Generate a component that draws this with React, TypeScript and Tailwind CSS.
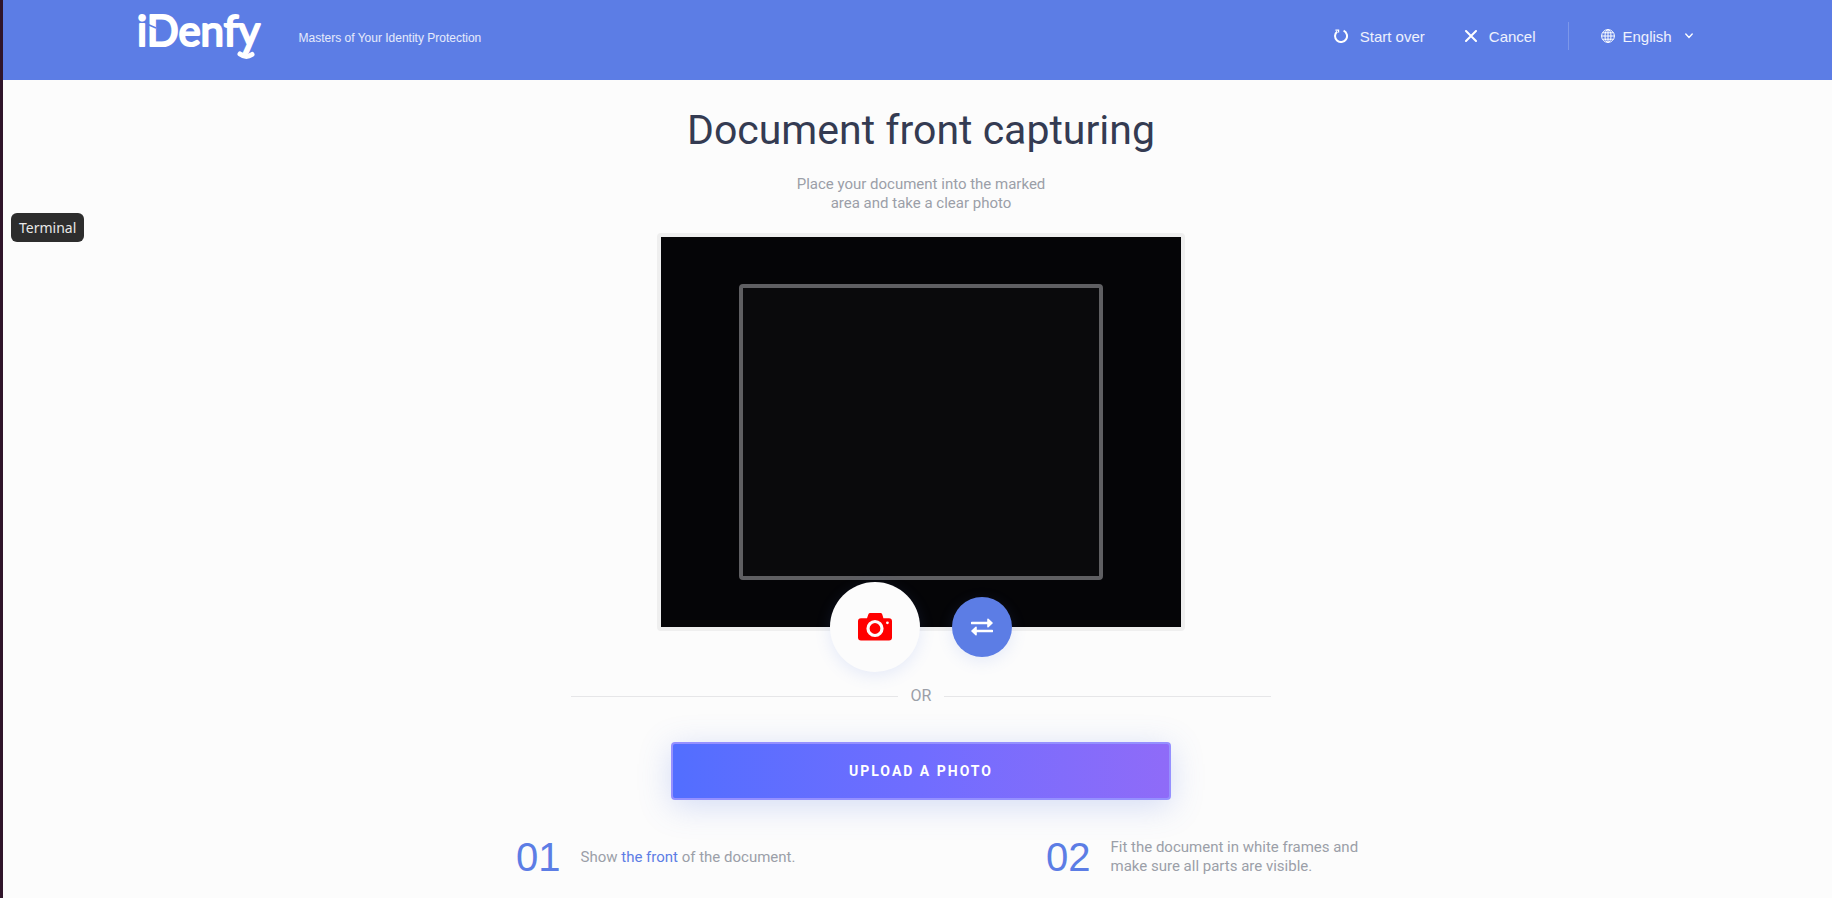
import React from "react";

function Logo() {
  return (
    <a href="#home" aria-label="iDenfy" className="block shrink-0">
      <svg width="123" height="56" viewBox="0 0 123 56" className="overflow-visible" aria-hidden="true">
        <text
          x="-2"
          y="42"
          fill="#ffffff"
          stroke="#ffffff"
          strokeWidth="2.2"
          strokeLinejoin="round"
          className="font-['Lato',sans-serif] text-[42px] font-normal"
        >
          iDenfy
        </text>
        <path d="M9 20.5L17 24" stroke="#5c7de5" strokeWidth="1.4" />
        <path d="M101 50Q107 54.5 113 50.5" fill="none" stroke="#ffffff" strokeWidth="5" strokeLinecap="round" />
      </svg>
    </a>
  );
}

function Header() {
  return (
    <header className="flex h-20 justify-center bg-[#5c7de5] pl-2 font-['Liberation_Sans',Arial,sans-serif] text-white">
      <div className="flex h-16 w-full max-w-[1566px] items-center">
        <Logo />
        <p className="pl-[37px] pt-3 text-xs text-white/85">Masters of Your Identity Protection</p>
        <nav className="ml-auto flex items-center pt-2 text-[15px] text-white/90">
          <button type="button" className="flex items-center gap-3">
            <svg width="14" height="14" viewBox="0 0 14 14" fill="none" stroke="white" strokeWidth="2" aria-hidden="true">
              <path d="M9.6 1.6A6 6 0 1 1 3.2 2.4" />
              <path d="M1.4 1.2H4.6V3.6" strokeWidth="1.2" />
            </svg>
            Start over
          </button>
          <button type="button" className="ml-10 flex items-center gap-3">
            <svg width="12" height="12" viewBox="0 0 12 12" stroke="white" strokeWidth="2" strokeLinecap="round" aria-hidden="true">
              <path d="M1 1L11 11M11 1L1 11" />
            </svg>
            Cancel
          </button>
          <span className="ml-8 h-7 w-px bg-white/20" />
          <label className="ml-8 flex items-center">
            <svg width="14" height="14" viewBox="0 0 14 14" fill="none" stroke="white" aria-hidden="true">
              <circle cx="7" cy="7" r="6.4" />
              <ellipse cx="7" cy="7" rx="3" ry="6.4" />
              <path d="M7 .6V13.4M.6 7H13.4M1.6 3.8H12.4M1.6 10.2H12.4" />
            </svg>
            <select aria-label="Language" className="ml-2 appearance-none bg-transparent outline-none">
              <option>English</option>
            </select>
            <svg width="8" height="6" viewBox="0 0 8 6" fill="none" stroke="white" strokeWidth="1.4" strokeLinecap="round" className="ml-3 mr-3" aria-hidden="true">
              <path d="M.8 1L4 4.4L7.2 1" />
            </svg>
          </label>
        </nav>
      </div>
    </header>
  );
}

function Camera() {
  return (
    <section className="relative w-full max-w-[528px] rounded border-4 border-[#efefef] bg-[#050507]">
      <div className="flex h-[390px] justify-center pt-[47px]">
        <div className="h-[296px] w-[70%] rounded border-4 border-[#5f5f62] bg-[#0a0a0c]" />
      </div>
      <div className="absolute inset-x-0 -bottom-[45px] flex items-center justify-center gap-8">
        <button
          type="button"
          aria-label="Take photo"
          className="flex size-[90px] items-center justify-center rounded-full bg-[#fcfcfc] shadow-[0_4px_16px_rgba(92,125,229,0.14)]"
        >
          <svg width="34" height="28" viewBox="0 0 34 28" aria-hidden="true">
            <path
              fill="#ff0000"
              d="M3 5.3H9L10.3 1.4Q10.8 0 12.2 0H22.4Q23.8 0 24.3 1.4L25.4 5.3H31Q34 5.3 34 8.3V24.5Q34 27.5 31 27.5H3Q0 27.5 0 24.5V8.3Q0 5.3 3 5.3Z"
            />
            <circle cx="17" cy="15.5" r="7" fill="none" stroke="#fcfcfc" strokeWidth="3.2" />
            <circle cx="29.4" cy="9.8" r="1.4" fill="#fcfcfc" />
          </svg>
        </button>
        <button
          type="button"
          aria-label="Switch camera"
          className="flex size-[60px] items-center justify-center rounded-full bg-[#5c7de5] shadow-[0_4px_16px_rgba(92,125,229,0.14)]"
        >
          <svg width="22" height="18" viewBox="0 0 22 18" aria-hidden="true">
            <path d="M1 5H17M5 13H21" stroke="#ffffff" strokeWidth="2.6" strokeLinecap="round" />
            <path
              d="M17 1.3L21 5L17 8.7ZM5 9.3L1 13L5 16.7Z"
              fill="#ffffff"
              stroke="#ffffff"
              strokeWidth="1.6"
              strokeLinejoin="round"
            />
          </svg>
        </button>
      </div>
    </section>
  );
}

function Step({ number, children }: { number: string; children: React.ReactNode }) {
  return (
    <li className="flex items-center gap-5 pl-[125px]">
      <span className="font-['Liberation_Sans',Arial,sans-serif] text-[40px] leading-10 text-[#5c7de5]">{number}</span>
      <p className="max-w-[270px]">{children}</p>
    </li>
  );
}

export default function App() {
  return (
    <div className="relative min-h-screen border-l-[3px] border-[#30152a] bg-[#fcfcfc] font-['Roboto',sans-serif] text-[15px] leading-[19px] text-[#9b9fa8]">
      <Header />
      <main className="flex flex-col items-center pl-[7px]">
        <h1 className="mt-[26px] text-[41px] leading-[48px] text-[#343b52]">Document front capturing</h1>
        <p className="mt-[21px] mb-5 max-w-[270px] text-center">
          Place your document into the marked area and take a clear photo
        </p>
        <Camera />
        <div className="mt-[53px] flex w-full max-w-[700px] items-center gap-[13px] text-base">
          <span className="h-px flex-1 bg-[#e6e6e8]" />
          OR
          <span className="h-px flex-1 bg-[#e6e6e8]" />
        </div>
        <button
          type="button"
          className="mt-[34px] h-[58px] w-full max-w-[500px] rounded border-2 border-[#9590ff] bg-linear-to-r from-[#526eff] via-[#706dff] to-[#8f6bf8] text-sm font-bold tracking-[2px] text-white shadow-[0_6px_32px_rgba(92,125,229,0.25)]"
        >
          UPLOAD A PHOTO
        </button>
        <ol className="mt-[37px] grid w-full max-w-[1060px] grid-cols-2">
          <Step number="01">
            Show <span className="text-[#5c7de5]">the front</span> of the document.
          </Step>
          <Step number="02">Fit the document in white frames and make sure all parts are visible.</Step>
        </ol>
      </main>
      <div
        role="tooltip"
        className="absolute left-2 top-[213px] rounded-md bg-[#2d2d2d] px-2 py-[5px] font-['Noto_Sans',sans-serif] text-sm leading-[19px] text-[#e8e8e8]"
      >
        Terminal
      </div>
    </div>
  );
}
